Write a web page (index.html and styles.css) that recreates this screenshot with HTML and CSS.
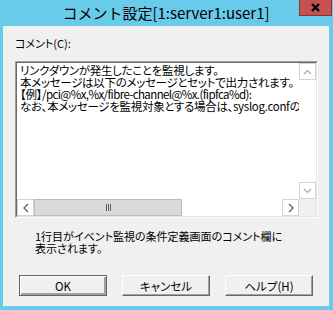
FILE: index.html
```html
<!DOCTYPE html>
<html lang="ja">

<head>
    <meta charset="UTF-8">
    <meta name="viewport" content="width=device-width, initial-scale=1.0">
    <title>コメント設定</title>
    <link rel="stylesheet" href="styles.css">
</head>

<body>
    <div class="window">
        <div class="titlebar">
            <span class="title">コメント設定[1:server1:user1]</span>
            <div class="close">
                <svg width="9" height="9" viewBox="0 0 9 9"><path d="M1 1 L8 8 M8 1 L1 8" stroke="#000" stroke-width="2.4" /></svg>
            </div>
        </div>
        <div class="client">
            <div class="label">コメント(C):</div>
            <div class="editOuter">
                <div class="editInner">
                    <div class="editText">リンクダウンが発生したことを監視します。
本メッセージは以下のメッセージとセットで出力されます。
【例】<span class="latin">/pci@%x,%x/fibre-channel@%x.(fipfca%d):</span>
なお、本メッセージを監視対象とする場合は、syslog.confの設定が必要です。</div>
                    <div class="vscroll">
                        <div class="arrowBtn">
                            <svg width="9" height="6" viewBox="0 0 9 6"><polyline points="1,5 4.5,1.5 8,5" fill="none" stroke="#a8a8a8" stroke-width="1.2" /></svg>
                        </div>
                        <div class="track"></div>
                        <div class="arrowBtn">
                            <svg width="9" height="6" viewBox="0 0 9 6"><polyline points="1,1 4.5,4.5 8,1" fill="none" stroke="#a8a8a8" stroke-width="1.2" /></svg>
                        </div>
                    </div>
                    <div class="hscroll">
                        <div class="arrowBtn">
                            <svg width="6" height="10" viewBox="0 0 6 10"><polyline points="5,1 1,5 5,9" fill="none" stroke="#606060" stroke-width="1.3" /></svg>
                        </div>
                        <div class="thumb"><span class="grip"></span><span class="grip"></span><span class="grip"></span></div>
                        <div class="track"></div>
                        <div class="arrowBtn">
                            <svg width="6" height="10" viewBox="0 0 6 10"><polyline points="1,1 5,5 1,9" fill="none" stroke="#606060" stroke-width="1.3" /></svg>
                        </div>
                    </div>
                    <div class="corner"></div>
                </div>
            </div>
            <p class="hint">1行目がイベント監視の条件定義画面のコメント欄に<br>表示されます。</p>
            <div class="buttons">
                <button type="button" class="btn default">OK</button>
                <button type="button" class="btn">キャンセル</button>
                <button type="button" class="btn">ヘルプ(H)</button>
            </div>
        </div>
    </div>
</body>

</html>
```

FILE: styles.css
```css
body {
    margin: 0;
    font-family: "Noto Sans CJK JP", sans-serif;
}

.window {
    width: 333px;
    height: 310px;
    box-sizing: border-box;
    background: #69cbea;
    padding: 0 4px 4px 3px;
    display: flex;
    flex-direction: column;
}

.titlebar {
    height: 26px;
    position: relative;
    display: flex;
    justify-content: center;
    align-items: center;
}

.title {
    font-size: 15px;
    color: #000;
    line-height: 26px;
}

.close {
    position: absolute;
    top: 0;
    right: -3px;
    width: 33px;
    height: 16px;
    box-sizing: border-box;
    background: #c75050;
    border: 1px solid #7a3a3a;
    border-top: 0;
    display: flex;
    align-items: center;
    justify-content: center;
}

.client {
    flex: 1;
    background: #f0f0f0;
    padding: 10px 0 0 12px;
    font-size: 11px;
    color: #000;
    font-feature-settings: "palt";
}

.label {
    height: 14px;
    line-height: 14px;
}

.editOuter {
    margin-top: 11px;
    width: 303px;
    height: 157px;
    box-sizing: border-box;
    border: 1px solid;
    border-color: #a0a0a0 #fff #fff #a0a0a0;
}

.editInner {
    height: 100%;
    box-sizing: border-box;
    border: 1px solid;
    border-color: #696969 #e3e3e3 #e3e3e3 #696969;
    display: grid;
    grid-template-columns: 1fr 17px;
    grid-template-rows: 1fr 17px;
}

.editText {
    background: #fff;
    padding: 1px 3px;
    line-height: 12px;
    font-size: 11.5px;
    letter-spacing: -0.3px;
    white-space: pre;
    overflow: hidden;
}

.latin {
    letter-spacing: -0.6px;
}

.vscroll {
    display: flex;
    flex-direction: column;
    background: #fff;
}

.hscroll {
    display: flex;
    background: #fff;
}

.track {
    flex: 1;
}

.arrowBtn {
    width: 17px;
    height: 17px;
    box-sizing: border-box;
    background: #fff;
    border: 1px solid #d4d4d4;
    display: flex;
    align-items: center;
    justify-content: center;
}

.thumb {
    width: 148px;
    box-sizing: border-box;
    background: #dadada;
    border: 1px solid #bcbcbc;
    display: flex;
    align-items: center;
    justify-content: center;
    gap: 1px;
}

.grip {
    width: 1px;
    height: 7px;
    background: #606060;
}

.corner {
    background: #f0f0f0;
}

.hint {
    margin: 12px 0 0 20px;
    line-height: 12px;
}

.buttons {
    margin-top: 21px;
    padding-left: 4px;
    display: flex;
    gap: 15px;
}

.btn {
    width: 88px;
    height: 21px;
    padding: 0;
    font: 11.5px "Noto Sans CJK JP", sans-serif;
    font-feature-settings: "palt";
    color: #000;
    background: #f0f0f0;
    border: 1px solid;
    border-color: #fff #696969 #696969 #fff;
    box-shadow: inset -1px -1px #a0a0a0;
}

.btn.default {
    border-color: #646464;
    box-shadow: inset 1px 1px #fff, inset -2px -2px #a0a0a0;
}
```
